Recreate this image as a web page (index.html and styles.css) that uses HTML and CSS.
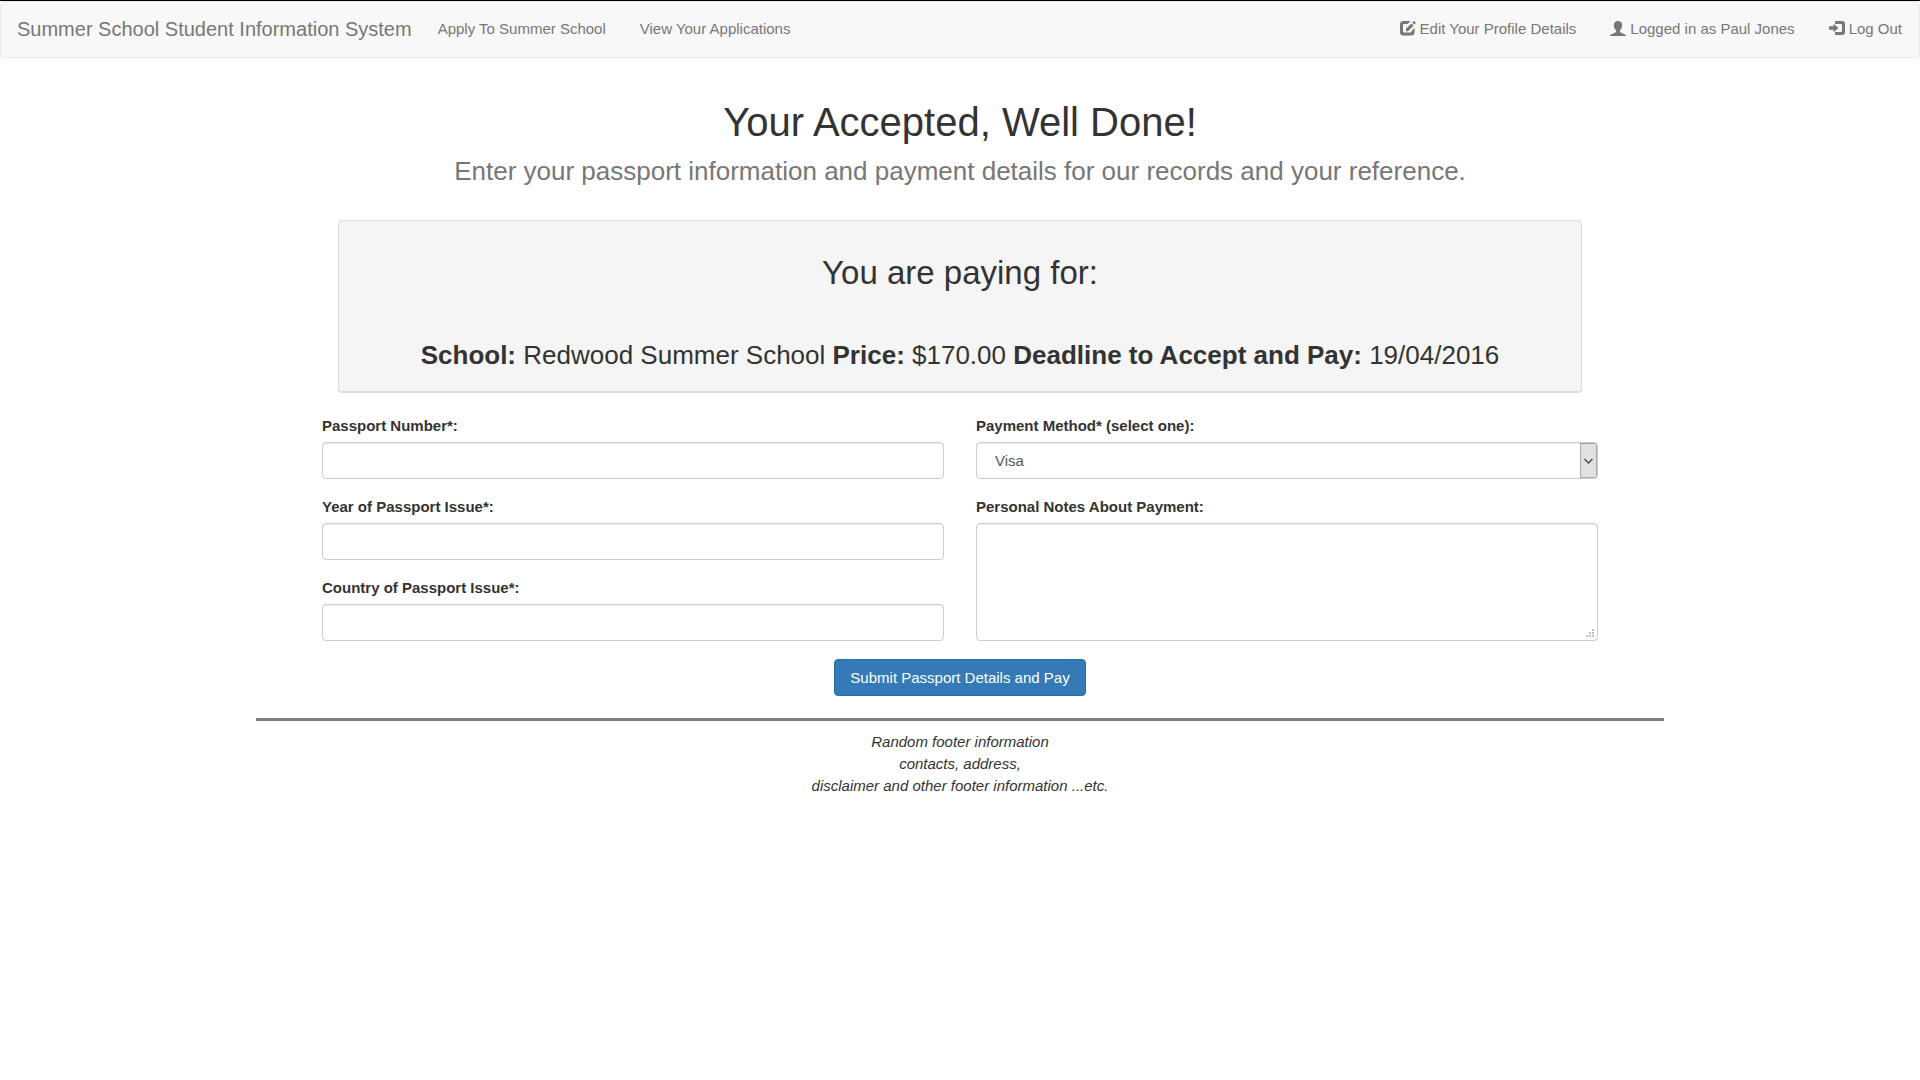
FILE: index.html
```html
<!DOCTYPE html>
<html lang="en">
<head>
<meta charset="utf-8">
<meta name="viewport" content="width=device-width, initial-scale=1">
<title>Summer School Student Information System</title>
<link rel="stylesheet" href="styles.css">
</head>
<body>
<nav class="navbar">
  <a class="brand" href="#">Summer School Student Information System</a>
  <ul class="nav-list">
    <li><a href="#">Apply To Summer School</a></li>
    <li><a href="#">View Your Applications</a></li>
  </ul>
  <ul class="nav-list nav-right">
    <li><a href="#"><svg class="icon" viewBox="0 0 16 16" aria-hidden="true"><path d="M10.500 0H3.500A3.500 3.500 0 0 0 0 3.500V11a3.500 3.500 0 0 0 3.500 3.500H11a3.500 3.500 0 0 0 3.500-3.500V7L11.500 10V10.500a1 1 0 0 1-1 1H4a1 1 0 0 1-1-1V4a1 1 0 0 1 1-1H7.600zM6 10.500V7.800L11.500 2.400l2.100 2.100L8.300 10zM12.300 1.600L13.600.3a.6.6 0 0 1 .8 0l1.200 1.200a.6.6 0 0 1 0 .8L14.400 3.600z"/></svg>Edit Your Profile Details</a></li>
    <li><a href="#"><svg class="icon" viewBox="0 0 16 16" aria-hidden="true"><path d="M8 0C5.400 0 3.800 1.700 3.800 4.300c0 1.900.9 3.800 2.200 5v1.200c0 .5-.3.900-.8 1.100L1 13.500c-.7.300-1 .8-1 1.500h16c0-.7-.3-1.200-1-1.500l-4.200-1.900c-.5-.2-.8-.6-.8-1.100V9.300c1.300-1.200 2.200-3.100 2.200-5C12.200 1.700 10.600 0 8 0z"/></svg>Logged in as Paul Jones</a></li>
    <li><a href="#"><svg class="icon" viewBox="0 0 16 16" aria-hidden="true"><path d="M6 0h7a3 3 0 0 1 3 3v8a3 3 0 0 1-3 3H6v-3h6a1 1 0 0 0 1-1V4a1 1 0 0 0-1-1H6zM4.500 2.800L9.500 7l-5 4.200V8.800H0V5.200h4.500z"/></svg>Log Out</a></li>
  </ul>
</nav>
<main class="page">
  <header class="page-title">
    <h1>Your Accepted, Well Done!</h1>
    <p>Enter your passport information and payment details for our records and your reference.</p>
  </header>
  <section class="panel">
    <h2>You are paying for:</h2>
    <p><strong>School:</strong> Redwood Summer School <strong>Price:</strong> $170.00 <strong>Deadline to Accept and Pay:</strong> 19/04/2016</p>
  </section>
  <form class="payment-form">
    <div class="columns">
      <div class="column">
        <div class="field">
          <label for="passport">Passport Number*:</label>
          <input class="control" id="passport" type="text">
        </div>
        <div class="field">
          <label for="year">Year of Passport Issue*:</label>
          <input class="control" id="year" type="text">
        </div>
        <div class="field">
          <label for="country">Country of Passport Issue*:</label>
          <input class="control" id="country" type="text">
        </div>
      </div>
      <div class="column">
        <div class="field">
          <label for="method">Payment Method* (select one):</label>
          <select class="control select" id="method"><option>Visa</option></select>
        </div>
        <div class="field field-grow">
          <label for="notes">Personal Notes About Payment:</label>
          <textarea class="control notes" id="notes"></textarea>
        </div>
      </div>
    </div>
    <button class="submit" type="submit">Submit Passport Details and Pay</button>
  </form>
  <footer class="footer">
    <p>Random footer information<br>contacts, address,<br>disclaimer and other footer information ...etc.</p>
  </footer>
</main>
</body>
</html>
```
FILE: styles.css
```css
* {
  box-sizing: border-box;
}

body {
  margin: 0;
  border-top: 1px solid #000;
  background: #fff;
  color: #333;
  font-family: "Liberation Sans", Arial, sans-serif;
  font-size: 15px;
  line-height: 22px;
}

h1, h2, p, ul {
  margin: 0;
  padding: 0;
}

.navbar {
  display: flex;
  flex-wrap: wrap;
  align-items: center;
  border: 1px solid #e7e7e7;
  border-radius: 4px;
  background: #f8f8f8;
}

.navbar a {
  display: flex;
  align-items: center;
  padding: 16px 17px 17px;
  color: #777;
  text-decoration: none;
}

.navbar .brand {
  padding: 16px 9px 17px 16px;
  font-size: 20px;
}

.nav-list {
  display: flex;
  flex-wrap: wrap;
  list-style: none;
}

.nav-right {
  margin-left: auto;
}

.icon {
  width: 16px;
  height: 16px;
  margin-right: 4px;
  fill: #777;
}

.page {
  max-width: 1408px;
  margin: 0 auto;
}

.page-title {
  padding: 42px 16px 0;
  text-align: center;
}

.page-title h1 {
  font-size: 40px;
  font-weight: 400;
  line-height: 44px;
}

.page-title p {
  margin-top: 12px;
  color: #777;
  font-size: 26px;
  line-height: 30px;
}

.panel {
  max-width: 1244px;
  margin: 34px auto 22px;
  padding: 34px 16px 18px;
  border: 1px solid #ddd;
  border-bottom-width: 2px;
  border-radius: 4px;
  background: #f5f5f5;
  text-align: center;
}

.panel h2 {
  font-size: 33px;
  font-weight: 400;
  line-height: 36px;
}

.panel p {
  margin-top: 46px;
  font-size: 26px;
  line-height: 36px;
}

.payment-form {
  max-width: 1276px;
  margin: 0 auto;
  text-align: center;
}

.columns {
  display: grid;
  grid-template-columns: 1fr 1fr;
  gap: 32px;
  text-align: left;
}

.column {
  display: flex;
  flex-direction: column;
  gap: 17px;
}

.field {
  display: flex;
  flex-direction: column;
  gap: 5px;
}

.field-grow {
  flex: 1;
}

label {
  font-weight: 700;
}

.control {
  width: 100%;
  height: 37px;
  padding: 6px 13px;
  border: 1px solid #ccc;
  border-radius: 4px;
  background-color: #fff;
  box-shadow: inset 0 1px 1px rgba(0, 0, 0, 0.075);
  color: #555;
  font: inherit;
}

.select {
  padding-left: 18px;
  appearance: none;
  background-image: url("data:image/svg+xml,%3Csvg xmlns='http://www.w3.org/2000/svg' width='17' height='35'%3E%3Crect x='.5' y='.5' width='16' height='34' fill='%23e1e1e1' stroke='%23acacac'/%3E%3Cpath d='M4.500 16l4 4 4-4' fill='none' stroke='%23444' stroke-width='1.300'/%3E%3C/svg%3E");
  background-position: right center;
  background-repeat: no-repeat;
}

.notes {
  flex: 1;
  resize: vertical;
}

.notes::-webkit-resizer {
  background: url("data:image/svg+xml,%3Csvg xmlns='http://www.w3.org/2000/svg' width='11' height='11'%3E%3Cpath d='M6 0h2v2h-2zM3 3h2v2h-2zM6 3h2v2h-2zM0 6h2v2h-2zM3 6h2v2h-2zM6 6h2v2h-2z' fill='%23bfbfbf'/%3E%3C/svg%3E") right bottom no-repeat;
}

.submit {
  height: 37px;
  margin-top: 18px;
  padding: 0 15px;
  border: 1px solid #2e6da4;
  border-radius: 4px;
  background: #337ab7;
  color: #fff;
  font: inherit;
}

.footer {
  margin-top: 22px;
  padding: 10px 16px;
  border-top: 3px solid #808080;
  font-style: italic;
  text-align: center;
}
```
